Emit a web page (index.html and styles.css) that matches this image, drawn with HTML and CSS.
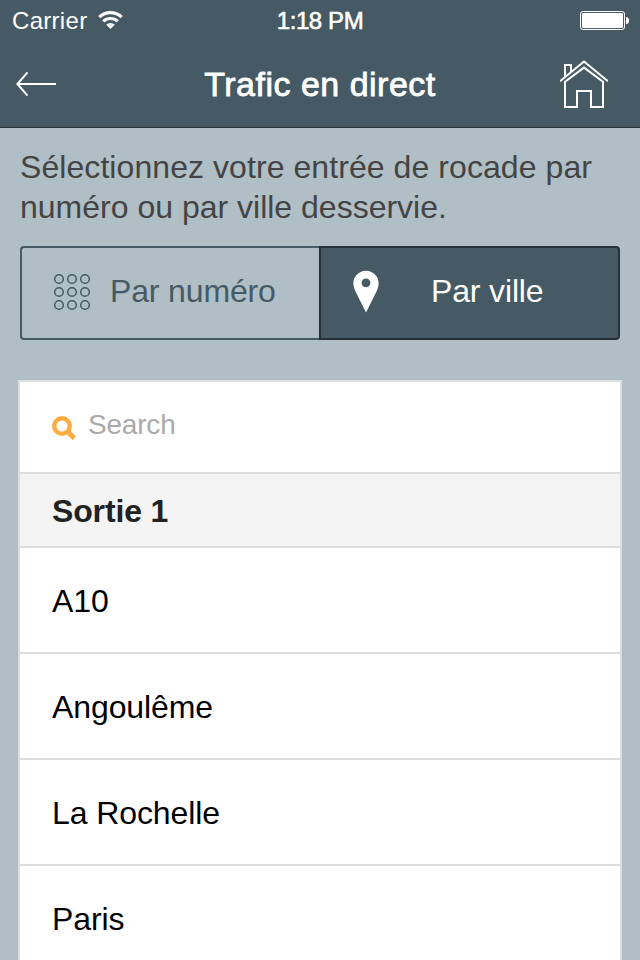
FILE: index.html
```html
<!DOCTYPE html>
<html lang="fr">
<head>
<meta charset="utf-8">
<title>Trafic en direct</title>
<link rel="stylesheet" href="styles.css">
</head>
<body>
<header class="header">
  <div class="status">
    <div class="carrier"><span class="carrier-name">Carrier</span>
      <svg class="wifi" width="26" height="20" viewBox="0 0 26 20"><g fill="none" stroke="#fff"><path d="M1.300 7.100a16.200 16.200 0 0 1 22.400 0" stroke-width="3.300"/><path d="M5.300 11.300a10.400 10.400 0 0 1 14.400 0" stroke-width="3"/></g><path d="M12.500 19l-4.300-4.200a6.200 6.200 0 0 1 8.600 0z" fill="#fff"/></svg>
    </div>
    <div class="clock">1:18 PM</div>
    <div class="power"><svg width="50" height="20" viewBox="0 0 50 20"><rect x=".5" y=".5" width="44" height="18" rx="2.5" fill="none" stroke="#fff"/><rect x="2" y="2" width="41" height="15" rx="1.2" fill="#fff"/><path d="M46 6q3 0 3 3.5T46 13z" fill="#fff"/></svg></div>
  </div>
  <nav class="nav">
    <svg class="back" width="42" height="28" viewBox="0 0 42 28"><path d="M11.500 2.300L1.400 14L11.500 25.700M1.400 14H40" fill="none" stroke="#fff" stroke-width="2"/></svg>
    <h1 class="title">Trafic en direct</h1>
    <svg class="home" width="48" height="50" viewBox="0 0 48 50"><g fill="none" stroke="#fff" stroke-width="2"><path d="M0 21.200L24 1.600L48 21.200"/><path d="M5 21.800L24 7.600L43 21.800V47H31V31H17V47H5Z"/><path d="M5 17V5H11V12"/></g></svg>
  </nav>
</header>
<main class="content">
  <p class="intro"><span class="intro-first">Sélectionnez votre entrée de rocade par</span><br>numéro ou par ville desservie.</p>
  <div class="tabs">
    <div class="tab">
      <svg class="dots" width="38" height="38" viewBox="0 0 38 38"><g fill="none" stroke="#455a64" stroke-width="1.500"><circle cx="6" cy="6" r="4.300"/><circle cx="19" cy="6" r="4.300"/><circle cx="32" cy="6" r="4.300"/><circle cx="6" cy="19" r="4.300"/><circle cx="19" cy="19" r="4.300"/><circle cx="32" cy="19" r="4.300"/><circle cx="6" cy="32" r="4.300"/><circle cx="19" cy="32" r="4.300"/><circle cx="32" cy="32" r="4.300"/></g></svg>
      <span>Par numéro</span>
    </div>
    <div class="tab tab-active">
      <svg class="pin" width="26" height="43" viewBox="0 0 26 43"><path fill="#fff" fill-rule="evenodd" d="M13 .8C6 .8.4 6.400.4 13.200c0 3 .9 5.600 2.100 8.200L13 42.500l10.500-21.100c1.200-2.600 2.100-5.200 2.100-8.200C25.600 6.400 20 .8 13 .8zM13 8.500a4.400 4.400 0 1 1 0 8.800a4.400 4.400 0 1 1 0-8.800z"/></svg>
      <span>Par ville</span>
    </div>
  </div>
  <section class="list">
    <div class="search">
      <svg class="loupe" width="24" height="24" viewBox="0 0 24 24"><g fill="none" stroke="#ffab40"><circle cx="10" cy="10" r="7.800" stroke-width="4.400"/><path d="M15 15L22.300 22.300" stroke-width="5"/></g></svg>
      <span>Search</span>
    </div>
    <h2 class="group">Sortie 1</h2>
    <div class="row">A10</div>
    <div class="row">Angoulême</div>
    <div class="row">La Rochelle</div>
    <div class="row">Paris</div>
  </section>
</main>
</body>
</html>
```
FILE: styles.css
```css
* { box-sizing: border-box; }
body {
  margin: 0;
  height: 960px;
  overflow: hidden;
  background: #b0bec5;
  font-family: "Liberation Sans", Arial, sans-serif;
  font-size: 32px;
}
svg { display: block; flex: none; }
.header { height: 128px; background: #455a64; border-bottom: 1px solid #263238; color: #fff; }
.status { height: 40px; display: grid; grid-template-columns: 1fr 120px 1fr; font-size: 24px; line-height: 42px; }
.carrier { display: flex; padding-left: 12px; gap: 10px; }
.carrier-name { width: 76px; white-space: nowrap; letter-spacing: 0.3px; }
.wifi { margin-top: 10px; }
.clock { text-align: center; white-space: nowrap; letter-spacing: -0.4px; -webkit-text-stroke: 0.6px #fff; }
.power { display: flex; justify-content: flex-end; padding: 11px 10px 0 0; }
.nav { height: 87px; display: grid; grid-template-columns: 60px 1fr 60px; padding: 0 16px; align-items: start; }
.back { margin-top: 30px; }
.title { margin: 0; font-size: 34px; font-weight: 400; line-height: 88px; text-align: center; white-space: nowrap; letter-spacing: 0.5px; -webkit-text-stroke: 0.8px #fff; }
.home { margin: 20px 0 0 -4px; }
.content { padding: 19px 18px 0; }
.intro { margin: 0 2px; height: 99px; line-height: 40px; color: #444; white-space: nowrap; }
.intro-first { letter-spacing: 0.07px; }
.tabs { display: flex; height: 94px; margin: 0 2px; line-height: 86px; white-space: nowrap; letter-spacing: -0.15px; }
.tab { display: flex; width: 300px; border: 2px solid #455a64; border-right: 0; border-radius: 4px 0 0 4px; color: #455a64; padding-left: 31px; }
.dots { margin: 25px 19px 0 0; }
.tab-active { width: 301px; margin-left: -1px; background: #455a64; border: 2px solid #263238; border-radius: 0 4px 4px 0; color: #fff; padding-left: 32px; }
.pin { margin: 22px 52px 0 0; }
.list { margin-top: 40px; border: 2px solid #ddd; background: #fff; }
.search { display: flex; height: 92px; padding: 0 32px; border-bottom: 2px solid #ddd; font-size: 28px; line-height: 86px; letter-spacing: -0.2px; color: #aaa; }
.loupe { margin: 34px 12px 0 0; }
.group { margin: 0; height: 74px; padding: 0 32px; border-bottom: 2px solid #ddd; background: #f4f4f4; font-size: 32px; line-height: 74px; letter-spacing: -0.15px; color: #222; }
.row { height: 106px; padding: 0 32px; border-bottom: 2px solid #ddd; line-height: 106px; letter-spacing: -0.1px; color: #000; }
```
